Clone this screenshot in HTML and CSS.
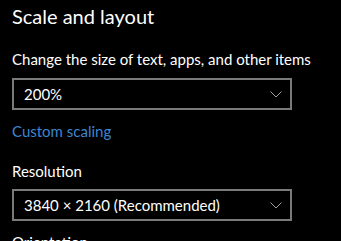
FILE: index.html
```html
<!DOCTYPE html>
<html>
<head>
<meta charset="utf-8">
<link rel="stylesheet" href="styles.css">
</head>
<body>
<div class="page">
  <h1 class="title">Scale and layout</h1>
  <div class="label first">Change the size of text, apps, and other items</div>
  <div class="select sel1"><span>200%</span><svg class="chev" width="12" height="7" viewBox="0 0 12 7"><path d="M0.5 0.5 L6 6 L11.5 0.5" fill="none" stroke="#a0a0a0" stroke-width="1"/></svg></div>
  <a class="link">Custom scaling</a>
  <div class="label res">Resolution</div>
  <div class="select sel2"><span>3840 × 2160 (Recommended)</span><svg class="chev" width="12" height="7" viewBox="0 0 12 7"><path d="M0.5 0.5 L6 6 L11.5 0.5" fill="none" stroke="#a0a0a0" stroke-width="1"/></svg></div>
  <div class="label orient">Orientation</div>
</div>
</body>
</html>
```
FILE: styles.css
```css
html, body {
  margin: 0;
  background: #000;
}
.page {
  padding: 0 0 0 12px;
  font-family: "Lato", "Noto Sans", sans-serif;
  color: #fff;
  display: flex;
  flex-direction: column;
  align-items: flex-start;
}
.title {
  margin: 2px 0 0 0;
  font-size: 20px;
  font-weight: 400;
  line-height: 28px;
}
.label {
  font-size: 15px;
  line-height: 20px;
}
.label.first {
  margin-top: 19px;
}
.label.res {
  margin-top: 20px;
}
.label.orient {
  margin-top: 11px;
}
.select {
  box-sizing: border-box;
  width: 280px;
  height: 32px;
  border: 2px solid #7a7a7a;
  display: flex;
  align-items: center;
  justify-content: space-between;
  padding: 0 8px 0 10px;
  font-size: 15px;
  line-height: 20px;
}
.sel1 {
  margin-top: 9px;
}
.sel2 {
  margin-top: 8px;
}
.chev {
  display: block;
}
.link {
  color: #3d86d0;
  font-size: 15px;
  line-height: 20px;
  margin-top: 11px;
}
```
